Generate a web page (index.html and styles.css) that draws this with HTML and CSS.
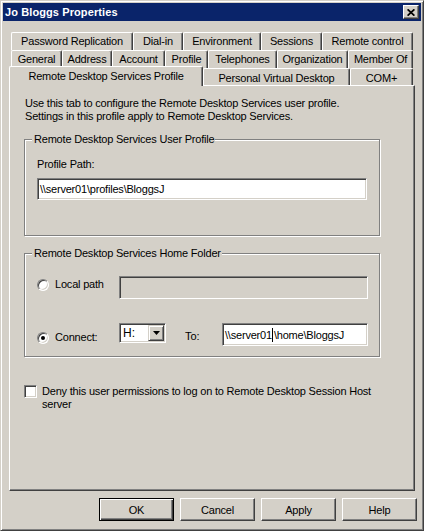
FILE: index.html
```html
<!DOCTYPE html>
<html>
<head>
<meta charset="utf-8">
<link rel="stylesheet" href="styles.css">
</head>
<body>
<div class="window">
  <div class="titlebar">
    <span class="title">Jo Bloggs Properties</span>
    <div class="close"><svg width="8" height="7" viewBox="0 0 8 7"><path d="M0.6 0.3 L7.4 6.7 M7.4 0.3 L0.6 6.7" stroke="#000" stroke-width="1.7" fill="none"/></svg></div>
  </div>
  <div class="tabs">
    <div class="tabrow row1">
      <div class="tab">Password Replication</div>
      <div class="tab">Dial-in</div>
      <div class="tab">Environment</div>
      <div class="tab">Sessions</div>
      <div class="tab">Remote control</div>
    </div>
    <div class="tabrow row2">
      <div class="tab">General</div>
      <div class="tab">Address</div>
      <div class="tab">Account</div>
      <div class="tab">Profile</div>
      <div class="tab">Telephones</div>
      <div class="tab">Organization</div>
      <div class="tab">Member Of</div>
    </div>
    <div class="tabrow row3">
      <div class="tab active">Remote Desktop Services Profile</div>
      <div class="tab">Personal Virtual Desktop</div>
      <div class="tab">COM+</div>
    </div>
  </div>
  <div class="panel">
    <p class="intro">Use this tab to configure the Remote Desktop Services user profile.<br>Settings in this profile apply to Remote Desktop Services.</p>
    <fieldset class="group group1">
      <legend>Remote Desktop Services User Profile</legend>
      <div class="label">Profile Path:</div>
      <div class="field wide">\\server01\profiles\BloggsJ</div>
    </fieldset>
    <fieldset class="group group2">
      <legend>Remote Desktop Services Home Folder</legend>
      <div class="row row-local">
        <div class="opt"><span class="radio"></span><span class="opt-text">Local path</span></div>
        <div class="field disabled local"></div>
      </div>
      <div class="row row-connect">
        <div class="opt"><span class="radio checked"></span><span class="opt-text">Connect:</span></div>
        <div class="combo"><span class="combo-text">H:</span><span class="drop"><svg width="7" height="4" viewBox="0 0 7 4"><path d="M0 0H7L3.5 4Z" fill="#000"/></svg></span></div>
        <span class="to">To:</span>
        <div class="field home">\\server01<span class="caret"></span>\home\BloggsJ</div>
      </div>
    </fieldset>
    <div class="check">
      <span class="box"></span>
      <span class="check-text">Deny this user permissions to log on to Remote Desktop Session Host<br>server</span>
    </div>
  </div>
  <div class="buttons">
    <div class="btn default">OK</div>
    <div class="btn">Cancel</div>
    <div class="btn">Apply</div>
    <div class="btn">Help</div>
  </div>
</div>
</body>
</html>
```

FILE: styles.css
```css
* { box-sizing: border-box; }
html, body { margin: 0; padding: 0; }
body {
  width: 424px;
  height: 531px;
  background: #d4d0c8;
  font-family: "Liberation Sans", Arial, sans-serif;
  font-size: 11px;
  color: #000;
  overflow: hidden;
}
.window {
  width: 424px;
  height: 531px;
  background: #d4d0c8;
  border: 1px solid;
  border-color: #d4d0c8 #404040 #404040 #d4d0c8;
  box-shadow: inset 1px 1px #fff, inset -1px -1px #808080;
  padding: 2px;
}
.titlebar {
  height: 18px;
  background: #0a246a;
  display: flex;
  align-items: center;
  padding: 0 2px 0 2px;
}
.title {
  color: #fff;
  font-weight: bold;
  font-size: 11px;
  flex: 1;
  letter-spacing: 0.1px;
}
.close {
  width: 16px;
  height: 14px;
  background: #d4d0c8;
  border: 1px solid;
  border-color: #fff #404040 #404040 #fff;
  box-shadow: inset -1px -1px #808080;
  display: flex;
  align-items: center;
  justify-content: center;
  padding-right: 1px;
}
.close svg { display: block; }

.tabs { margin-top: 11px; }
.tabrow { display: grid; }
.row1 { height: 18px; margin-left: 8px; grid-template-columns: 122px 50px 78px 61px 91px; }
.row2 { height: 18px; margin-left: 8px; grid-template-columns: 51px 50px 53px 43px 69px 71px 65px; }
.row3 { height: 17px; margin-left: 6px; grid-template-columns: 194px 147px 63px; }
.tab {
  height: 18px;
  border-top: 1px solid #fff;
  border-left: 1px solid #fff;
  border-right: 1px solid #404040;
  border-top-left-radius: 2px;
  border-top-right-radius: 2px;
  box-shadow: inset -1px 0 #808080;
  background: #d4d0c8;
  display: flex;
  align-items: center;
  justify-content: center;
  white-space: nowrap;
  letter-spacing: -0.2px;
  padding-bottom: 1px;
}
.row3 .tab { height: 17px; padding-top: 1px; padding-bottom: 0; }
.row3 .tab.active {
  position: relative;
  z-index: 1;
  margin-top: -2px;
  height: 20px;
  padding-top: 0;
  padding-bottom: 2px;
}

.panel {
  margin-left: 6px;
  width: 406px;
  height: 406px;
  border: 1px solid;
  border-color: #fff #404040 #404040 #fff;
  box-shadow: inset -1px -1px #808080;
  padding: 11px 0 0 14px;
}
.intro {
  margin: 0 0 0 1px;
  line-height: 13px;
  white-space: nowrap;
  letter-spacing: -0.2px;
}
.group {
  margin: 0;
  width: 356px;
  min-width: 0;
  border: 1px solid #808080;
  box-shadow: inset 1px 1px #fff, 1px 1px #fff;
}
.group legend {
  margin-left: -5px;
  padding: 0 1px 0 2px;
  line-height: 13px;
  background: #d4d0c8;
  letter-spacing: -0.2px;
}
.group1 { margin-top: 10px; padding: 12px 0 35px 12px; }
.group2 { margin-top: 11px; padding: 16px 0 10px 12px; }
.label { line-height: 13px; letter-spacing: -0.2px; }

.field {
  height: 22px;
  background: #fff;
  border: 1px solid;
  border-color: #808080 #fff #fff #808080;
  box-shadow: inset 1px 1px #404040, inset -1px -1px #d4d0c8;
  display: flex;
  align-items: center;
  padding-left: 2px;
  white-space: nowrap;
  letter-spacing: -0.2px;
}
.field.wide { width: 330px; margin-top: 7px; }
.field.disabled { background: #d4d0c8; }
.field.local { width: 249px; height: 23px; }
.field.home { width: 146px; height: 23px; margin-left: 0; }
.caret {
  display: inline-block;
  flex: none;
  width: 1px;
  height: 14px;
  background: #000;
  margin: 0 1px 0 0;
}

.row { display: flex; align-items: flex-start; height: 23px; }
.row-connect { margin-top: 24px; }
.opt { display: flex; align-items: center; width: 82px; height: 13px; }
.row-local .opt { margin-top: 2px; }
.row-connect .opt { margin-top: 8px; }
.opt-text { margin-left: 6px; line-height: 13px; letter-spacing: -0.2px; }
.radio {
  position: relative;
  width: 12px;
  height: 12px;
  flex: none;
  border-radius: 50%;
  background: #fff;
  border: 1px solid;
  border-color: #808080 #fff #fff #808080;
  box-shadow: inset 1px 1px #404040, inset -1px -1px #d4d0c8;
}
.radio.checked::after {
  content: "";
  position: absolute;
  left: 3px;
  top: 3px;
  width: 4px;
  height: 4px;
  border-radius: 50%;
  background: #000;
}
.combo {
  width: 47px;
  height: 20px;
  background: #fff;
  border: 1px solid;
  border-color: #808080 #fff #fff #808080;
  box-shadow: inset 1px 1px #404040, inset -1px -1px #d4d0c8;
  display: flex;
  align-items: center;
  padding: 1px;
}
.combo-text { flex: 1; padding-left: 2px; line-height: 13px; font-size: 12px; }
.drop {
  width: 16px;
  height: 16px;
  background: #d4d0c8;
  border: 1px solid;
  border-color: #d4d0c8 #404040 #404040 #d4d0c8;
  box-shadow: inset 1px 1px #fff, inset -1px -1px #808080;
  display: flex;
  align-items: center;
  justify-content: center;
}
.drop svg { display: block; }
.to { margin: 7px 0 0 19px; width: 37px; line-height: 13px; }

.check { display: flex; align-items: flex-start; margin-top: 28px; }
.box {
  width: 13px;
  height: 13px;
  flex: none;
  background: #fff;
  border: 1px solid;
  border-color: #808080 #fff #fff #808080;
  box-shadow: inset 1px 1px #404040, inset -1px -1px #d4d0c8;
  margin-top: 0;
}
.check-text { margin-left: 5px; line-height: 13px; letter-spacing: -0.2px; white-space: nowrap; }

.buttons {
  display: flex;
  justify-content: flex-end;
  gap: 6px;
  margin-top: 7px;
  padding-right: 4px;
}
.btn {
  width: 75px;
  height: 23px;
  background: #d4d0c8;
  border: 1px solid;
  border-color: #fff #404040 #404040 #fff;
  box-shadow: inset -1px -1px #808080;
  display: flex;
  align-items: center;
  justify-content: center;
  letter-spacing: -0.2px;
}
.btn.default {
  border-color: #000;
  box-shadow: inset 1px 1px #fff, inset -1px -1px #404040, inset -2px -2px #808080;
}
```
